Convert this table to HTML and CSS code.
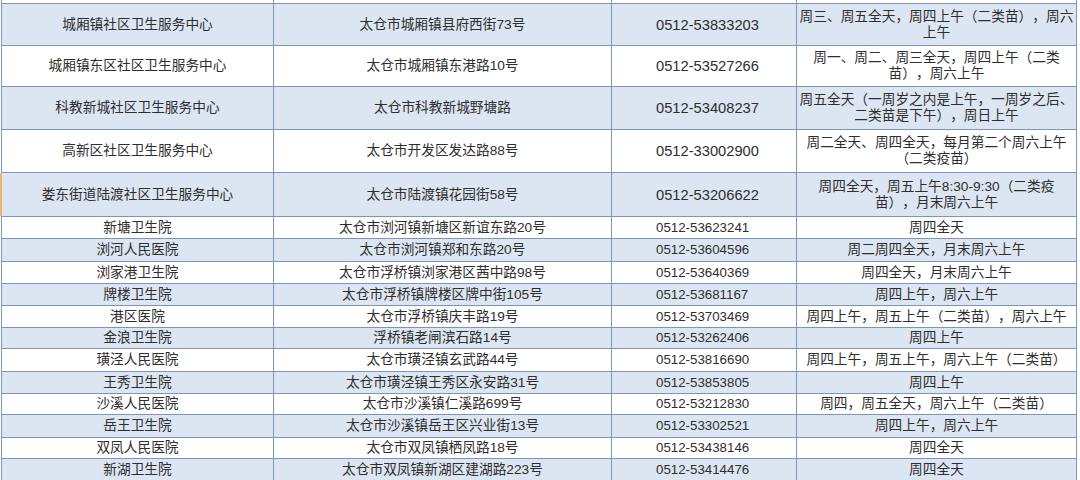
FILE: index.html
```html
<!DOCTYPE html>
<html lang="zh-CN">
<head>
<meta charset="utf-8">
<title>接种门诊</title>
<link rel="stylesheet" href="styles.css">
</head>
<body>
<div class="sheet">
  <div class="row top"><div></div><div></div><div></div><div></div></div>
  <div class="row alt big"><div>城厢镇社区卫生服务中心</div><div>太仓市城厢镇县府西街73号</div><div class="tel">0512-53833203</div><div class="sch">周三、周五全天，周四上午（二类苗），周六上午</div></div>
  <div class="row big"><div>城厢镇东区社区卫生服务中心</div><div>太仓市城厢镇东港路10号</div><div class="tel">0512-53527266</div><div class="sch">周一、周二、周三全天，周四上午（二类苗），周六上午</div></div>
  <div class="row alt big"><div>科教新城社区卫生服务中心</div><div>太仓市科教新城野塘路</div><div class="tel">0512-53408237</div><div class="sch">周五全天（一周岁之内是上午，一周岁之后、二类苗是下午），周日上午</div></div>
  <div class="row big"><div>高新区社区卫生服务中心</div><div>太仓市开发区发达路88号</div><div class="tel">0512-33002900</div><div class="sch">周二全天、周四全天，每月第二个周六上午（二类疫苗）</div></div>
  <div class="row alt big mark"><div>娄东街道陆渡社区卫生服务中心</div><div>太仓市陆渡镇花园街58号</div><div class="tel">0512-53206622</div><div class="sch">周四全天，周五上午8:30-9:30（二类疫苗），月末周六上午</div></div>
  <div class="row"><div>新塘卫生院</div><div>太仓市浏河镇新塘区新谊东路20号</div><div class="tel">0512-53623241</div><div class="sch">周四全天</div></div>
  <div class="row alt"><div>浏河人民医院</div><div>太仓市浏河镇郑和东路20号</div><div class="tel">0512-53604596</div><div class="sch">周二周四全天，月末周六上午</div></div>
  <div class="row"><div>浏家港卫生院</div><div>太仓市浮桥镇浏家港区茜中路98号</div><div class="tel">0512-53640369</div><div class="sch">周四全天，月末周六上午</div></div>
  <div class="row alt"><div>牌楼卫生院</div><div>太仓市浮桥镇牌楼区牌中街105号</div><div class="tel">0512-53681167</div><div class="sch">周四上午，周六上午</div></div>
  <div class="row"><div>港区医院</div><div>太仓市浮桥镇庆丰路19号</div><div class="tel">0512-53703469</div><div class="sch">周四上午，周五上午（二类苗），周六上午</div></div>
  <div class="row alt"><div>金浪卫生院</div><div>浮桥镇老闸滨石路14号</div><div class="tel">0512-53262406</div><div class="sch">周四上午</div></div>
  <div class="row"><div>璜泾人民医院</div><div>太仓市璜泾镇玄武路44号</div><div class="tel">0512-53816690</div><div class="sch">周四上午，周五上午，周六上午（二类苗）</div></div>
  <div class="row alt"><div>王秀卫生院</div><div>太仓市璜泾镇王秀区永安路31号</div><div class="tel">0512-53853805</div><div class="sch">周四上午</div></div>
  <div class="row"><div>沙溪人民医院</div><div>太仓市沙溪镇仁溪路699号</div><div class="tel">0512-53212830</div><div class="sch">周四，周五全天，周六上午（二类苗）</div></div>
  <div class="row alt"><div>岳王卫生院</div><div>太仓市沙溪镇岳王区兴业街13号</div><div class="tel">0512-53302521</div><div class="sch">周四上午，周六上午</div></div>
  <div class="row"><div>双凤人民医院</div><div>太仓市双凤镇栖凤路18号</div><div class="tel">0512-53438146</div><div class="sch">周四全天</div></div>
  <div class="row alt"><div>新湖卫生院</div><div>太仓市双凤镇新湖区建湖路223号</div><div class="tel">0512-53414476</div><div class="sch">周四全天</div></div>
</div>
</body>
</html>
```
FILE: styles.css
```css
html, body {
  margin: 0;
  padding: 0;
  background: #ffffff;
}

body {
  width: 1080px;
  height: 480px;
  overflow: hidden;
  font-family: "Liberation Sans", "Noto Sans CJK SC", sans-serif;
  font-size: 13.7px;
  color: #2e2e2e;
  text-spacing-trim: space-all;
}

.sheet {
  margin-left: 1px;
  width: 1076px;
  box-sizing: border-box;
  padding: 0 1px 1px 1px;
  background: #7b95bb;
  display: grid;
  grid-template-columns: 271px 337px 184px 279px;
  grid-template-rows: 3px 41px 40px 42px 42px 43px 21px 22px 21px 21px 21px 20px 22px 21px 20px 22px 20px 21px;
  gap: 1px;
}

.row {
  display: contents;
}

.row > div {
  background: #ffffff;
  display: flex;
  align-items: center;
  justify-content: center;
  text-align: center;
  line-height: 16px;
  padding: 0 1.5px;
  white-space: nowrap;
  overflow: hidden;
}

.row.alt > div {
  background: #dce6f2;
}

.row > .sch {
  white-space: normal;
}

.row > .tel {
  justify-content: flex-start;
  padding-left: 44px;
  font-size: 13.3px;
}

.row.big > .tel {
  font-size: 14.7px;
}

.row.mark > div:first-child {
  box-shadow: -2px 0 0 #f2b568;
}
```
